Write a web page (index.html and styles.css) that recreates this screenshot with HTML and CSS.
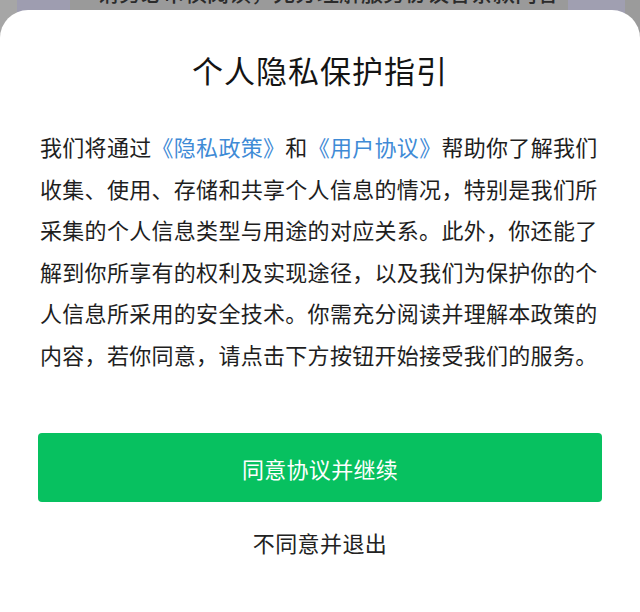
FILE: index.html
```html
<!DOCTYPE html>
<html lang="zh-CN">
<head>
<meta charset="utf-8">
<title>个人隐私保护指引</title>
<link rel="stylesheet" href="styles.css">
</head>
<body>
<div class="screen">
  <div class="backdrop">
    <div class="top-strip">
      <div class="edge-left"></div>
      <div class="panel-left"></div>
      <div class="behind">
        <p class="behind-text">请务必审慎阅读，充分理解服务协议各条款内容</p>
      </div>
      <div class="panel-right"></div>
      <div class="edge-right"></div>
    </div>
  </div>
  <div class="sheet">
    <h1 class="title">个人隐私保护指引</h1>
    <p class="body-text">我们将通过<span class="link">《隐私政策》</span>和<span class="link">《用户协议》</span>帮助你了解我们收集、使用、存储和共享个人信息的情况，特别是我们所采集的个人信息类型与用途的对应关系。此外，你还能了解到你所享有的权利及实现途径，以及我们为保护你的个人信息所采用的安全技术。你需充分阅读并理解本政策的内容，若你同意，请点击下方按钮开始接受我们的服务。</p>
    <button class="agree" type="button">同意协议并继续</button>
    <button class="decline" type="button">不同意并退出</button>
  </div>
</div>
</body>
</html>
```
FILE: styles.css
```css
* {
  box-sizing: border-box;
}

html, body {
  margin: 0;
  padding: 0;
}

body {
  width: 640px;
  height: 612px;
  overflow: hidden;
  font-family: "Noto Sans CJK SC", "Noto Sans", sans-serif;
  background: #9b9b9b;
}

.screen {
  display: grid;
  width: 640px;
  height: 612px;
}

.backdrop,
.sheet {
  grid-area: 1 / 1;
}

.backdrop {
  background: #a2a2a2;
}

.top-strip {
  display: flex;
  height: 40px;
}

.edge-left {
  width: 17px;
  background: #a6a6a6;
}

.panel-left {
  width: 53px;
  background: #9e9db0;
}

.behind {
  flex: 1;
  background: #9a9a9a;
  overflow: hidden;
  padding-left: 27px;
}

.behind-text {
  margin: -22px 0 0 0;
  font-size: 22px;
  line-height: 26px;
  color: #2b2b2b;
  white-space: nowrap;
  font-weight: 500;
}

.panel-right {
  width: 57px;
  background: #a09fb1;
}

.edge-right {
  width: 15px;
  background: #9b9b9b;
}

.sheet {
  margin-top: 10px;
  background: #ffffff;
  border-radius: 28px 28px 0 0;
  display: flex;
  flex-direction: column;
  align-items: center;
  padding: 40px 0 0 0;
}

.title {
  margin: 0;
  font-size: 31px;
  line-height: 40px;
  font-weight: 400;
  letter-spacing: 1px;
  color: #141414;
}

.body-text {
  margin: 36px 0 0 0;
  width: 640px;
  padding: 0 40px;
  font-size: 22px;
  line-height: 41.5px;
  letter-spacing: 0.3px;
  color: #1e1e1e;
}

.link {
  color: #3f8bd6;
}

.agree {
  margin-top: 58px;
  width: 564px;
  height: 69px;
  border: none;
  border-radius: 4px;
  background: #07c160;
  color: #ffffff;
  font-family: inherit;
  font-size: 22px;
  letter-spacing: 0.3px;
  padding: 0;
}

.decline {
  margin-top: 25px;
  border: none;
  background: transparent;
  color: #222222;
  font-family: inherit;
  font-size: 22px;
  line-height: 30px;
  letter-spacing: 0.4px;
  padding: 0;
}
```
